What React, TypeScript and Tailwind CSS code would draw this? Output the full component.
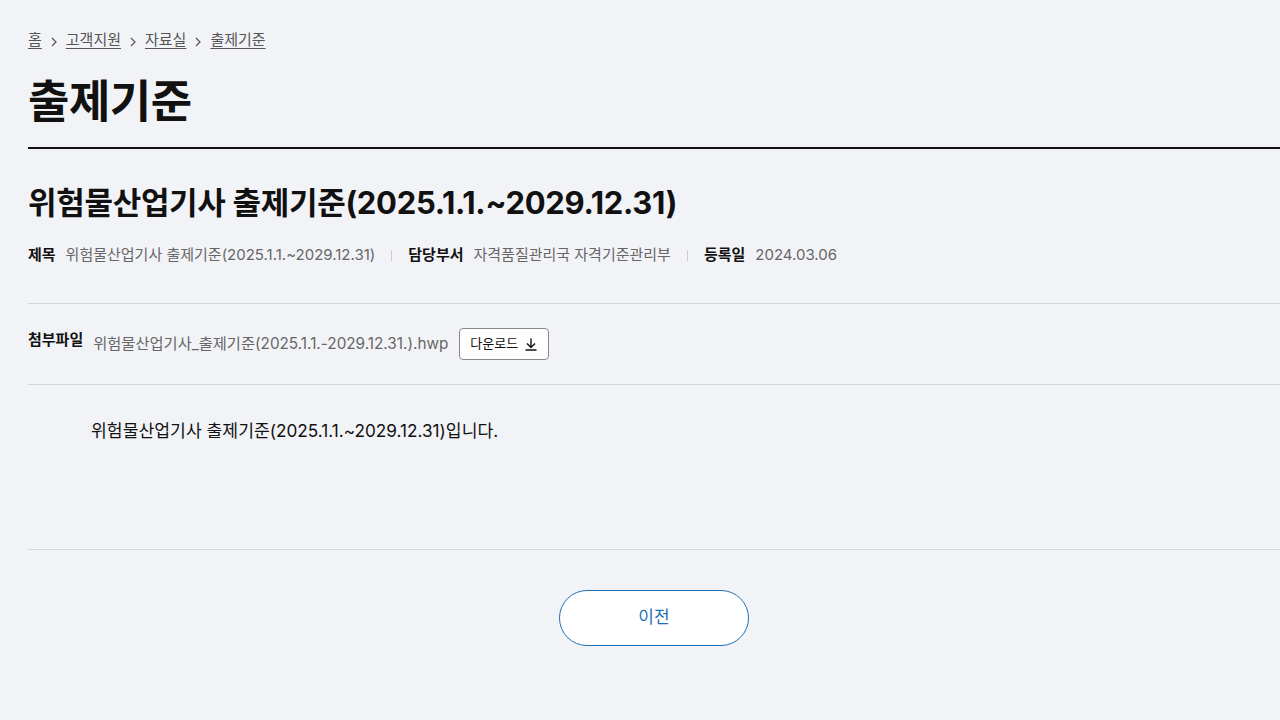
import React from 'react';

const FONT = { fontFamily: 'Inter, "Noto Sans CJK KR", "Noto Sans", sans-serif' };

function Chevron() {
  return (
    <svg width="12" height="12" viewBox="0 0 12 12" className="mx-[6px] mt-[3px]" fill="none">
      <path d="M4 2 L8 6 L4 10" stroke="#555" strokeWidth="1.2" />
    </svg>
  );
}

function Meta({ label, value }: { label: string; value: string }) {
  return (
    <div className="flex items-center gap-[10px]">
      <span className="font-bold text-[#111]">{label}</span>
      <span className="text-[#666]">{value}</span>
    </div>
  );
}

function Sep() {
  return <span className="mx-[16px] h-[11px] w-px bg-[#ccc]" />;
}

export default function App() {
  const crumbs = ['홈', '고객지원', '자료실', '출제기준'];
  return (
    <div className="min-h-[720px] w-[1280px] overflow-hidden bg-[#f2f3f7] pl-[28px]" style={FONT}>
      <nav className="flex items-center pt-[30px] text-[15px] leading-[20px] text-[#555]">
        {crumbs.map((c, i) => (
          <React.Fragment key={c}>
            {i > 0 && <Chevron />}
            <a className="underline underline-offset-[3px]">{c}</a>
          </React.Fragment>
        ))}
      </nav>

      <h1 className="mt-[22px] pb-[15px] text-[45px] font-bold leading-[60px] tracking-[-0.5px] text-[#111] border-b-2 border-[#111]">
        출제기준
      </h1>

      <h2 className="mt-[34px] text-[31px] font-bold leading-[40px] tracking-[-0.3px] text-[#111]">
        위험물산업기사 출제기준(2025.1.1.~2029.12.31)
      </h2>

      <div className="mt-[21px] flex items-center text-[15px] leading-[22px]">
        <Meta label="제목" value="위험물산업기사 출제기준(2025.1.1.~2029.12.31)" />
        <Sep />
        <Meta label="담당부서" value="자격품질관리국 자격기준관리부" />
        <Sep />
        <Meta label="등록일" value="2024.03.06" />
      </div>

      <div className="mt-[37px] border-t border-[#d5d6da]" />

      <div className="flex items-center py-[24px] text-[15px]">
        <span className="font-bold text-[#111] mb-[8px]">첨부파일</span>
        <span className="ml-[10px] text-[15.3px] text-[#666]">위험물산업기사_출제기준(2025.1.1.-2029.12.31.).hwp</span>
        <button className="ml-[11px] flex h-[32px] items-center gap-[6px] rounded-[4px] border border-[#888] bg-white px-[10px] text-[13px] text-[#111]">
          다운로드
          <svg width="14" height="14" viewBox="0 0 14 14" fill="none" stroke="#111" strokeWidth="1.4">
            <path d="M7 1.5 V10.5 M3 6.5 L7 10.5 L11 6.5 M1.5 13 H12.5" />
          </svg>
        </button>
      </div>

      <div className="border-t border-[#d5d6da]" />

      <div className="h-[164px] pl-[63px] pt-[34px] text-[17.2px] leading-[24px] text-[#111]">
        위험물산업기사 출제기준(2025.1.1.~2029.12.31)입니다.
      </div>

      <div className="border-t border-[#d5d6da]" />

      <div className="flex justify-center pt-[40px]">
        <button className="h-[56px] w-[190px] rounded-full border border-[#1f6fb5] bg-white text-[17px] text-[#1f6fb5]">
          이전
        </button>
      </div>
    </div>
  );
}
